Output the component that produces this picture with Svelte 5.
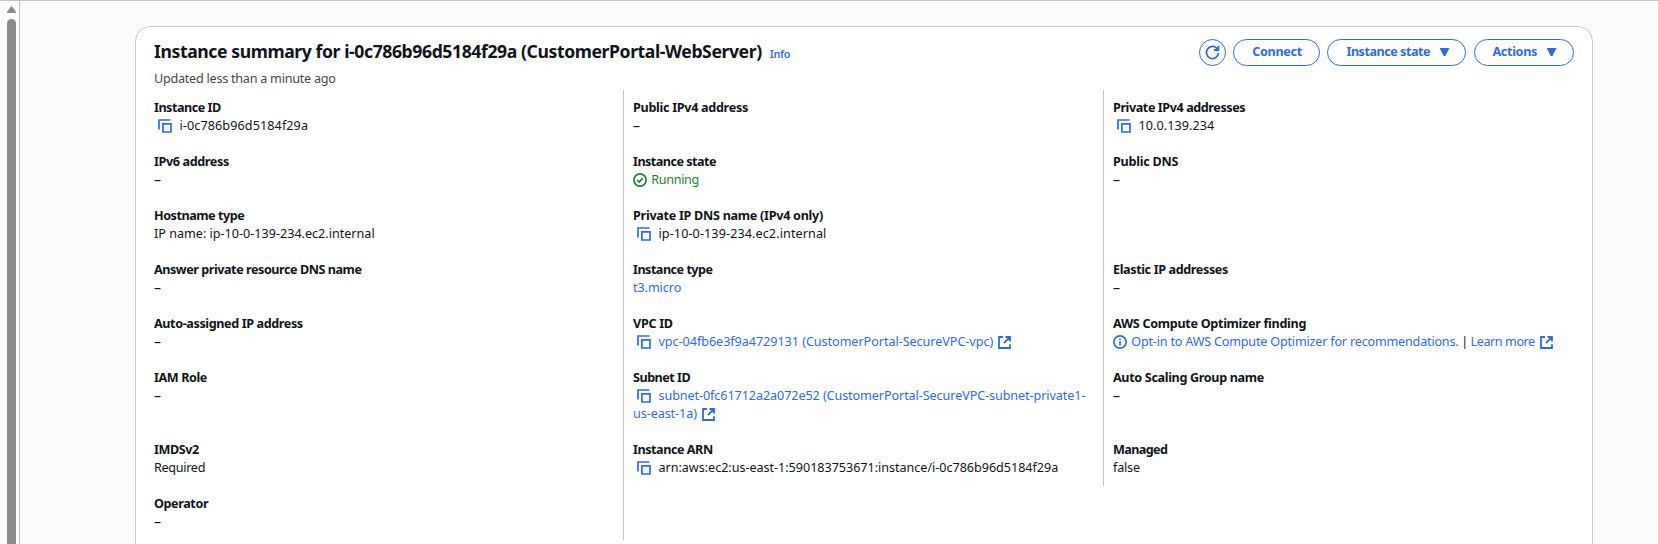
<script>
  // ls / vs: tracking, in px, of the label and of the value
  const rows = [
    [
      { label: 'Instance ID', ls: -0.48, kind: 'copy', value: 'i-0c786b96d5184f29a', vs: 0.1 },
      { label: 'Public IPv4 address', ls: -0.3, value: '–' },
      { label: 'Private IPv4 addresses', ls: -0.42, kind: 'copy', value: '10.0.139.234', vs: 0.06 },
    ],
    [
      { label: 'IPv6 address', ls: -0.38, value: '–' },
      { label: 'Instance state', ls: -0.52, kind: 'status', value: 'Running', vs: -0.33 },
      { label: 'Public DNS', ls: -0.25, value: '–' },
    ],
    [
      { label: 'Hostname type', ls: -0.46, value: 'IP name: ip-10-0-139-234.ec2.internal', vs: 0 },
      { label: 'Private IP DNS name (IPv4 only)', ls: -0.28, kind: 'copy', value: 'ip-10-0-139-234.ec2.internal', vs: 0.1 },
      {},
    ],
    [
      { label: 'Answer private resource DNS name', ls: -0.45, value: '–' },
      { label: 'Instance type', ls: -0.5, kind: 'link', value: 't3.micro', vs: -0.07 },
      { label: 'Elastic IP addresses', ls: -0.38, value: '–' },
    ],
    [
      { label: 'Auto-assigned IP address', ls: -0.39, value: '–' },
      { label: 'VPC ID', ls: -0.3, kind: 'copylink', value: 'vpc-04fb6e3f9a4729131 (CustomerPortal-SecureVPC-vpc)', vs: -0.04 },
      { label: 'AWS Compute Optimizer finding', ls: -0.3, kind: 'optimizer', value: 'Opt-in to AWS Compute Optimizer for recommendations.', vs: -0.19 },
    ],
    [
      { label: 'IAM Role', ls: -0.4, value: '–' },
      { label: 'Subnet ID', ls: -0.5, kind: 'copylink', value: 'subnet-0fc61712a2a072e52 (CustomerPortal-SecureVPC-subnet-private1-', rest: 'us-east-1a)', vs: -0.08 },
      { label: 'Auto Scaling Group name', ls: -0.34, value: '–' },
    ],
    [
      { label: 'IMDSv2', ls: -0.4, value: 'Required', vs: -0.3 },
      { label: 'Instance ARN', ls: -0.45, kind: 'copy', value: 'arn:aws:ec2:us-east-1:590183753671:instance/i-0c786b96d5184f29a', vs: -0.03 },
      { label: 'Managed', ls: -0.6, value: 'false', vs: -0.2 },
    ],
    [{ label: 'Operator', ls: -0.4, value: '–' }, {}],
  ];
</script>

{#snippet copyIcon()}
  <svg class="icon copy" viewBox="0 0 14 14"><path d="M1 10.5V1h11.5M4.9 4.9H13V13H4.9z" /></svg>
{/snippet}
{#snippet externalIcon()}
  <svg class="icon external" viewBox="0 0 13 13"><path d="M5 1H1v11h11V8.3M7.5 1H12v4.5M6 7l5.6-5.6" /></svg>
{/snippet}

<div class="page">
  <div class="scroll">
    <svg class="up" viewBox="0 0 9 7"><path d="M3.8.7Q4.5 0 5.2.7L8.8 5.5Q9.2 7 8 7H1Q-.2 7 .2 5.5z" /></svg>
    <div class="thumb"></div>
  </div>
  <main>
    <section class="card">
      <header>
        <div class="titles">
          <div class="headline">
            <h2>Instance summary for i-0c786b96d5184f29a (CustomerPortal-WebServer)</h2>
            <a class="info">Info</a>
          </div>
          <p>Updated less than a minute ago</p>
        </div>
        <div class="actions">
          <button class="refresh" aria-label="Refresh">
            <svg class="icon" viewBox="0 0 15 15"><path d="M9 5h4.4V.8M13.6 8.2A6.1 6.1 0 1 1 12.9 4.6" /></svg>
          </button>
          <button class="connect">Connect</button>
          <button class="state">Instance state <i class="caret"></i></button>
          <button class="menu">Actions <i class="caret"></i></button>
        </div>
      </header>
      <div class="grid">
        {#each rows as row}
          {#each row as c, i}
            <div class="cell" class:line={i > 0}>
              {#if c.label}
                <div class="label" style:letter-spacing="{c.ls}px">{c.label}</div>
                <div class="value" class:dash={c.value === '–'} style:letter-spacing="{c.vs ?? 0}px">
                  {#if c.kind === 'copy'}
                    {@render copyIcon()}<span>{c.value}</span>
                  {:else if c.kind === 'copylink'}
                    {@render copyIcon()}<a>{c.value}{#if c.rest}<br />{c.rest}{/if}</a>{@render externalIcon()}
                  {:else if c.kind === 'status'}
                    <span class="ok"><svg class="icon round" viewBox="0 0 14 14"><circle cx="7" cy="7" r="6.1" /><path d="m4.2 7 2 2 3.5-3.8" /></svg>{c.value}</span>
                  {:else if c.kind === 'link'}
                    <a>{c.value}</a>
                  {:else if c.kind === 'optimizer'}
                    <a><svg class="icon round" viewBox="0 0 14 14"><circle cx="7" cy="7" r="6.1" /><path d="M7 6.2v4.3M7 3.4v1.7" /></svg>{c.value}</a><span class="bar">|</span><a class="more">Learn more</a>{@render externalIcon()}
                  {:else}
                    {c.value}
                  {/if}
                </div>
              {/if}
            </div>
          {/each}
        {/each}
      </div>
    </section>
  </main>
</div>

<style>
  :global(body) { overflow: hidden; background: #fcfcfd; }
  * { box-sizing: border-box; }
  .page {
    display: flex; height: 544px; overflow: hidden; border-top: 1px solid #c3c3cc;
    font: 12.6px/18px "Noto Sans", sans-serif; color: #0f141a;
  }
  .scroll { width: 20px; flex: none; border-right: 1px solid #c3c3cc; padding: 5px 0 0 7px; display: flex; flex-direction: column; }
  .up { width: 9px; height: 7px; fill: #8b8b8b; display: block; }
  .thumb { width: 9px; margin-top: 6px; flex: 1; border-radius: 5px 5px 0 0; background: #8b8b8b; }
  main { flex: 1; padding: 25px 65px 0 115px; overflow: hidden; }
  .card { height: 700px; border: 1px solid #c6c6cd; border-radius: 15px; background: #fff; }
  header { display: flex; justify-content: space-between; height: 63px; padding: 12px 18.5px 0 18px; }
  .headline { display: flex; align-items: baseline; height: 26px; line-height: 25px; }
  h2 { margin: 0; font-size: 17.6px; font-weight: 700; letter-spacing: -0.405px; white-space: nowrap; }
  .info { margin-left: 8px; font-size: 10.8px; font-weight: 600; letter-spacing: -0.25px; }
  p { margin: 5px 0 0; line-height: 18px; color: #424650; letter-spacing: -0.24px; }
  .actions { display: flex; }
  a { color: #2f6bdc; }
  button {
    display: flex; align-items: center; justify-content: center; height: 27px; padding: 0 0 2px 2px; margin-left: 7px;
    border: 1.5px solid #2f6bdc; border-radius: 14px; background: #fff; color: #2f6bdc;
    font: 700 12.6px/18px "Noto Sans", sans-serif; letter-spacing: -0.3px;
  }
  .refresh { width: 27px; margin: 0; padding: 0; }
  .connect { width: 87px; }
  .state { width: 139px; padding-left: 4px; letter-spacing: -0.48px; }
  .menu { width: 100px; margin-left: 8px; }
  .caret { width: 10px; height: 8px; margin: 1px 0 0 9.5px; background: #2f6bdc; clip-path: polygon(0 0, 100% 0, 58% 100%, 42% 100%); }
  .grid { display: grid; grid-template-columns: 479px 480px 480px; margin-left: 8px; }
  .cell { padding: 9px 0 9px 10px; min-height: 54px; white-space: nowrap; }
  .line { border-left: 1px solid #c6c6cd; padding-left: 9px; }
  .label, .value { min-height: 18px; }
  .label { font-weight: 700; }
  .dash { font-size: 14px; }
  .icon { width: 15px; height: 15px; fill: none; stroke: currentColor; stroke-width: 1.8; vertical-align: -3px; }
  .copy { width: 14px; height: 14px; color: #2f6bdc; margin: 0 7.5px 0 4px; stroke-width: 1.7; }
  .external { width: 13px; height: 13px; color: #2f6bdc; margin-left: 5px; }
  .round { width: 14px; height: 14px; margin-right: 4.3px; stroke-width: 1.7; }
  .bar { margin: 0 2.6px 0 2.7px; }
  .more { letter-spacing: -0.42px; }
  .ok { color: #1f7d36; }
</style>
